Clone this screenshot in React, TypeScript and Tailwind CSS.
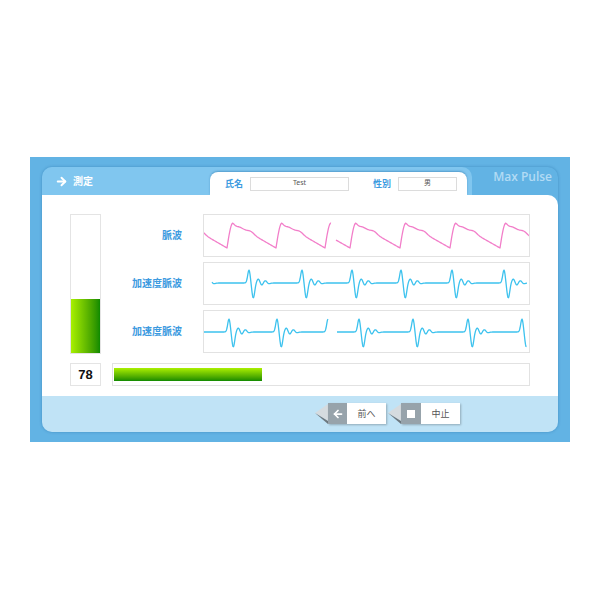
import { ArrowLeft, ArrowRight } from "lucide-react";

const g = (d: number, s: number) => Math.exp(-(d * d) / (2 * s * s));

function ptgPath(x0: number, x1: number, rise: number, period: number) {
  const pts: string[] = [];
  for (let x = x0; x <= x1; x += 0.5) {
    const u = (((x - rise) % period) + period) % period;
    let y: number;
    if (u < 6) {
      y = 34 - 25 * Math.sin((u / 6) * (Math.PI / 2));
    } else {
      const t = (u - 6) / (period - 6);
      y = 9 + 25 * t - 2 * g(u - 24, 3) + 1.2 * g(u - 9, 2);
    }
    pts.push(`${pts.length ? "L" : "M"}${x.toFixed(1)},${y.toFixed(2)}`);
  }
  return pts.join(" ");
}

function apgPath(x0: number, x1: number, spikes: number[], base: number) {
  const pts: string[] = [];
  for (let x = x0; x <= x1; x += 0.5) {
    let y = base;
    for (const t0 of spikes) {
      const d = x - t0;
      y +=
        -13 * g(d, 1.3) +
        15 * g(d - 4.3, 1.4) -
        4 * g(d - 9.3, 1.5) +
        2.5 * g(d - 12.8, 1.4) -
        2.5 * g(d - 16.3, 1.7) +
        1 * g(d - 19.5, 1.7);
    }
    pts.push(`${pts.length ? "L" : "M"}${x.toFixed(1)},${y.toFixed(2)}`);
  }
  return pts.join(" ");
}

function Chart({ paths, color }: { paths: string[]; color: string }) {
  return (
    <div className="h-[43px] w-[327px] border border-[#e2e2e2] bg-white">
      <svg width="325" height="41" viewBox="1 1 325 41" className="block">
        {paths.map((d, i) => (
          <path key={i} d={d} fill="none" stroke={color} strokeWidth="1.3" strokeLinejoin="round" />
        ))}
      </svg>
    </div>
  );
}

function Fold() {
  return (
    <svg width="13" height="22" viewBox="0 0 13 22" className="block">
      <polygon points="0,11 13,2 13,19" fill="#d5dbdf" />
      <polygon points="0,11 13,19 13,22" fill="#6d787f" />
    </svg>
  );
}

function FootButton({ icon, label, iconW }: { icon: React.ReactNode; label: string; iconW: string }) {
  return (
    <div className="flex items-end">
      <Fold />
      <div className="flex h-[21px] shadow-[1px_1px_2px_rgba(0,0,0,0.25)]">
        <div className={`flex ${iconW} items-center justify-center bg-[#97a3ab]`}>{icon}</div>
        <div className="flex w-[39px] items-center justify-center bg-white text-[9px] text-[#555]">{label}</div>
      </div>
    </div>
  );
}

const label = "text-[10px] font-semibold text-[#3d9be0]";
const tabLabel = "text-[9px] font-semibold text-[#3d9be0]";

export default function App() {
  const pink = [ptgPath(0, 128, 24, 49), ptgPath(133, 327, 147, 50)];
  const apg1 = [apgPath(9, 324, [-9, 46, 99, 149, 198, 249, 301], 21)];
  const apg2 = [apgPath(0, 125, [26, 74, 125], 22), apgPath(134, 323.5, [156, 210, 265, 319], 22)];

  return (
    <div
      className="flex h-[600px] w-[600px] flex-col bg-white px-[30px] pt-[157px]"
      style={{ fontFamily: '"Noto Sans", "Noto Sans CJK JP", sans-serif' }}
    >
      <div className="flex h-[285px] flex-col bg-[#62b3e4] px-[12px] py-[10px]">
        <div className="flex flex-1 flex-col shadow-[0_0_3px_rgba(0,70,130,0.35)] rounded-[10px]">
          {/* top row */}
          <div className="flex h-[28px]">
            <div className="flex w-[430px] items-stretch rounded-t-[10px] bg-[#80c6ef] pr-[5px]">
              <div className="flex flex-1 items-center gap-[5px] pl-[13px] pt-[1px] text-white">
                <ArrowRight size={13} strokeWidth={3.5} />
                <span className="text-[10px] font-bold">測定</span>
              </div>
              <div className="mt-[5px] flex w-[257px] items-center rounded-t-[8px] bg-white pl-[15px] shadow-[0_-1px_2px_rgba(0,80,140,0.35)]">
                <span className={tabLabel}>氏名</span>
                <div className="ml-[7px] flex h-[14px] w-[99px] items-center justify-center border border-[#dcdcdc] text-[7px] text-[#555]">
                  Test
                </div>
                <span className={`${tabLabel} ml-[24px]`}>性別</span>
                <div className="ml-[7px] flex h-[14px] w-[59px] items-center justify-center border border-[#dcdcdc] text-[7px] text-[#555]">
                  男
                </div>
              </div>
            </div>
            <div className="flex flex-1 justify-end pr-[6px] pt-[1px]">
              <span
                className="text-[12px] font-semibold text-[#b2dbf4]"
                style={{ fontFamily: '"Open Sans", sans-serif' }}
              >
                Max Pulse
              </span>
            </div>
          </div>

          {/* body */}
          <div className="flex flex-col gap-[9px] rounded-tr-[10px] bg-white pl-[28px] pt-[19px] pb-[10px]">
            <div className="flex">
              <div className="flex h-[140px] w-[31px] flex-col justify-end border border-[#e4e4e4]">
                <div className="h-[54px] bg-gradient-to-r from-[#a8f000] to-[#0a8a00]" />
              </div>
              <div className="flex w-[102px] flex-col gap-[5px] pr-[21px]">
                <div className={`flex h-[43px] items-center justify-end ${label}`}>脈波</div>
                <div className={`flex h-[43px] items-center justify-end ${label}`}>加速度脈波</div>
                <div className={`flex h-[43px] items-center justify-end ${label}`}>加速度脈波</div>
              </div>
              <div className="flex flex-col gap-[5px]">
                <Chart paths={pink} color="#f27ec9" />
                <Chart paths={apg1} color="#3cc2ee" />
                <Chart paths={apg2} color="#3cc2ee" />
              </div>
            </div>
            <div className="flex gap-[11px]">
              <div
                className="flex h-[23px] w-[31px] items-center justify-center border border-[#e4e4e4] text-[13px] font-bold text-[#111]"
                style={{ fontFamily: '"Liberation Sans", sans-serif' }}
              >
                78
              </div>
              <div className="flex h-[23px] w-[418px] items-center border border-[#e2e2e2] px-[1px]">
                <div className="h-[13px] w-[148px] bg-gradient-to-b from-[#aaf000] to-[#0b8b00]" />
              </div>
            </div>
          </div>

          {/* footer */}
          <div className="flex flex-1 items-center gap-[2px] rounded-b-[10px] bg-[#c0e3f6] pl-[273px] pb-[2px]">
            <FootButton
              icon={<ArrowLeft size={12} strokeWidth={3.5} color="white" />}
              label="前へ"
              iconW="w-[19px]"
            />
            <FootButton icon={<div className="h-[8px] w-[8px] bg-white" />} label="中止" iconW="w-[20px]" />
          </div>
        </div>
      </div>
    </div>
  );
}
